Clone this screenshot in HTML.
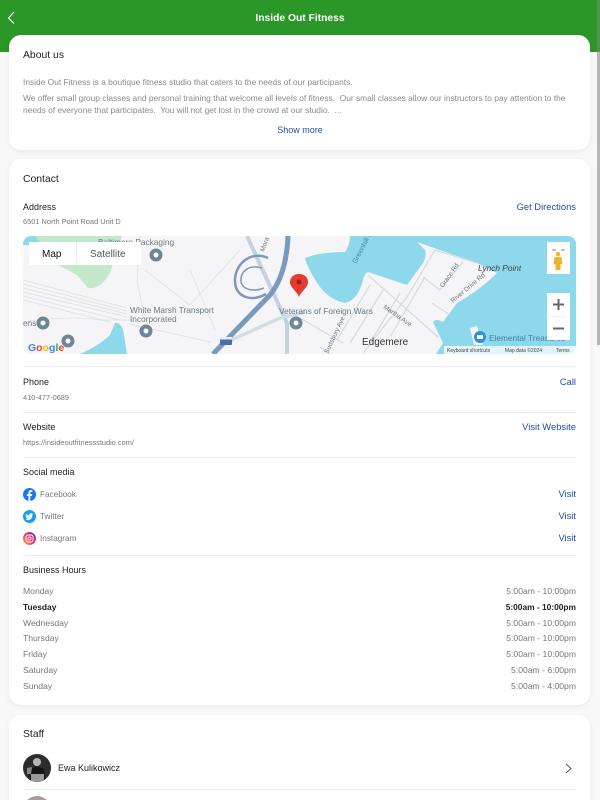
<!DOCTYPE html>
<html><head><meta charset="utf-8"><style>
*{box-sizing:border-box}
html,body{margin:0;padding:0;width:600px;height:800px;overflow:hidden;background:#f8f8f9;font-family:"Liberation Sans",sans-serif}
#w{position:relative;width:600px;height:800px;overflow:hidden;filter:blur(.3px)}
.hd{position:absolute;left:0;top:0;width:600px;height:52px;background:#2a9728}
.card{position:absolute;left:9px;width:581px;background:#fff;border-radius:12px;box-shadow:0 2px 6px rgba(0,0,0,.06)}
.t{position:absolute;white-space:nowrap;line-height:12px;height:12px}
.h{font-size:10.4px;color:#222;left:23px}
.g{font-size:8.4px;color:#8a8a8a;left:23px}
.s{font-size:7.4px;color:#777;left:23px}
.b{font-size:9.4px;color:#1f4fa0;right:24px}
.r{font-size:8.6px;color:#777;right:24px}
.d{font-size:8.6px;color:#777;left:23px}
.k{color:#222;font-weight:bold;font-size:8.4px}
.l{position:absolute;left:23px;width:553px;height:1px;background:#ececec}
.sb{position:absolute;left:597px;top:0;width:3px;height:345px;background:rgba(130,130,130,.55)}
svg{position:absolute}
</style></head><body><div id="w">
<div class="hd"></div>
<svg style="left:0;top:0" width="24" height="36" viewBox="0 0 24 36"><path d="M14 12 L8.500 18 L14 23.500" fill="none" stroke="#fff" stroke-width="1.1"/></svg>
<div class="t" style="left:0;width:600px;text-align:center;top:13px;font-size:10.300px;font-weight:bold;color:#fff">Inside Out Fitness</div>

<div class="card" style="top:35px;height:115px"></div>
<div class="card" style="top:159px;height:546px"></div>
<div class="card" style="top:715px;height:85px;border-radius:12px 12px 0 0"></div>

<div class="t h" style="top:50px">About us</div>
<div class="t g" style="top:76px">Inside Out Fitness is a boutique fitness studio that caters to the needs of our participants.</div>
<div class="t g" style="top:92px">We offer small group classes and personal training that welcome all levels of fitness.&nbsp; Our small classes allow our instructors to pay attention to the</div>
<div class="t g" style="top:104px">needs of everyone that participates.&nbsp; You will not get lost in the crowd at our studio.&nbsp; ...</div>
<div class="t" style="left:0;width:600px;text-align:center;top:124px;font-size:9px;color:#1f4fa0">Show more</div>

<div class="t h" style="top:174px">Contact</div>
<div class="t h" style="top:201px;font-size:9px">Address</div>
<div class="t b" style="top:201px">Get Directions</div>
<div class="t s" style="top:216px">6501 North Point Road Unit D</div>

<svg style="left:23px;top:236px" width="553" height="118" viewBox="23 236 553 118">
<defs><clipPath id="c"><rect x="23" y="236" width="553" height="118" rx="8"/></clipPath></defs>
<g clip-path="url(#c)">
<rect x="23" y="236" width="553" height="118" fill="#f5f4f6"/>
<path d="M23 236H48L35 245H23Z" fill="#8ed8ec"/>
<path d="M35 236H122L110 273Q100 290 88 288L77 275L58 265Z" fill="#c4e8cc"/>
<path d="M305 258Q320 252 345 252Q350 245 350 236H576V354H436L443 343L433 322Q436 318 443 322L457 303Q480 290 497 273L477 263L417 242L425 250Q427 256 423 263L407 285L368 272Q364 274 363 280Q358 300 345 303Q330 300 320 287Q308 270 305 258Z" fill="#8ed8ec"/>
<path d="M470 328L477 326L483 345L474 345Z" fill="#f5f4f6"/>
<path d="M115 323Q122 322 124 335L127 354H80Q100 345 110 335Z" fill="#8ed8ec"/>
<g fill="none" stroke="#dcdee2" stroke-width=".7">
<path d="M23 280L127 308M23 284L127 311M23 288L127 314M23 292L127 317M23 296L120 320M23 300L110 322"/>
<path d="M23 322Q70 315 100 320L130 320M130 324L210 342M140 236L137 280L145 320M145 270L190 305L240 250M190 270L215 330"/>
</g>
<g fill="none" stroke="#d4dae2" stroke-width="1.2">
<path d="M368 275L438 337M423 277L440 290M435 250L407 297L363 353M425 277L390 337M400 293L370 343M383 290L350 343M370 285L337 340M435 250L477 263M463 262L440 290M432 303L450 315M300 318L343 343M320 347L330 354"/>
</g>
<path d="M247 236L287 323V354" fill="none" stroke="#c3d2de" stroke-width="4"/>
<path d="M227 342L280 318L305 312" fill="none" stroke="#d2dde6" stroke-width="3.500"/>
<path d="M268 258C250 250 234 265 235 282C236 298 252 302 266 294" fill="none" stroke="#7b98bd" stroke-width="2.500"/>
<path d="M262 268C248 264 240 272 241 282C243 290 254 292 264 288" fill="none" stroke="#7b98bd" stroke-width="1.500"/>
<path d="M288 236C287 260 282 280 270 295L213 354" fill="none" stroke="#7b98bd" stroke-width="5"/>
<path d="M299 274c-6 0-9 4-9 8c0 6 7 9 9 15c2-6 9-9 9-15c0-4-3-8-9-8z" fill="#e53a30"/><circle cx="299" cy="282" r="2.500" fill="#a51f18"/>
<g fill="#6f8696"><circle cx="156" cy="255" r="6.500"/><circle cx="43" cy="323" r="6.500"/><circle cx="146" cy="331" r="6.500"/><circle cx="296" cy="323" r="6.500"/><circle cx="68" cy="341" r="6.500"/></g>
<g fill="#fff"><circle cx="156" cy="255" r="2.500"/><circle cx="43" cy="323" r="2.500"/><circle cx="146" cy="331" r="2.500"/><circle cx="296" cy="323" r="2.500"/><circle cx="68" cy="341" r="2.500"/></g>
<circle cx="480" cy="337" r="6" fill="#2f8fd8"/><rect x="477" y="335" width="6" height="4" fill="#fff"/>
<g font-family="Liberation Sans,sans-serif" font-size="8.300" fill="#6b7a86">
<text x="98" y="245">Baltimore Packaging</text>
<text x="130" y="313">White Marsh Transport</text><text x="130" y="322">Incorporated</text>
<text x="23" y="326">ens</text>
<text x="279" y="314">Veterans of Foreign Wars</text>
<text x="489" y="341" fill="#3e7fa8">Elemental Treasures</text>
<text x="362" y="345" font-size="10" fill="#333">Edgemere</text>
<text x="478" y="271" font-style="italic" fill="#444">Lynch Point</text>
<text font-size="6.500" transform="translate(443,288) rotate(-55)">Grace Rd</text>
<text font-size="6.500" transform="translate(453,303) rotate(-40)">River Drive Rd</text>
<text font-size="6.500" transform="translate(383,308) rotate(35)">Martha Ave</text>
<text font-size="6.500" transform="translate(328,354) rotate(-65)">Sudsbury Ave</text>
<text font-size="7" fill="#3e8fa8" transform="translate(356,264) rotate(-62)">Greenhill Cove</text>
<text font-size="6.500" transform="translate(264,252) rotate(-70)">Mora</text>
</g>
<rect x="220" y="337" width="12" height="8" rx="1" fill="#4a6fb0"/><rect x="220" y="337" width="12" height="2.500" fill="#e8eef5"/>
<text x="28" y="351" font-family="Liberation Sans,sans-serif" font-size="10.500" font-weight="bold"><tspan fill="#4285f4">G</tspan><tspan fill="#ea4335">o</tspan><tspan fill="#fbbc05">o</tspan><tspan fill="#4285f4">g</tspan><tspan fill="#34a853">l</tspan><tspan fill="#ea4335">e</tspan></text>
<rect x="29" y="242" width="112" height="23" fill="#fff"/><rect x="76" y="242" width=".6" height="23" fill="#e6e6e6"/>
<text x="42" y="257" font-family="Liberation Sans,sans-serif" font-size="10" fill="#111">Map</text>
<text x="90" y="257" font-family="Liberation Sans,sans-serif" font-size="10" fill="#555">Satellite</text>
<rect x="547" y="242" width="23" height="32" fill="#fff"/>
<path d="M553 251v-1h3M564 251v-1h-3" fill="none" stroke="#888"/>
<circle cx="558" cy="254" r="2.200" fill="#f0b32b"/><path d="M554.500 257h7l1 7h-2v6h-5v-6h-2z" fill="#f0b32b"/>
<rect x="547" y="293" width="23" height="47" fill="#fff"/><rect x="551" y="316" width="15" height=".7" fill="#e6e6e6"/>
<path d="M553 304.500h11M558.500 299v11M553 328.500h11" stroke="#666" stroke-width="2" fill="none"/>
<rect x="444" y="346" width="132" height="8" fill="#fff" fill-opacity=".75"/>
<g font-family="Liberation Sans,sans-serif" font-size="5" fill="#444"><text x="447" y="352">Keyboard shortcuts</text><text x="505" y="352">Map data ©2024</text><text x="556" y="352">Terms</text></g>
</g></svg>

<div class="l" style="top:366px"></div>
<div class="t h" style="top:376px;font-size:9px">Phone</div>
<div class="t b" style="top:376px">Call</div>
<div class="t s" style="top:392px">410-477-0689</div>
<div class="l" style="top:412px"></div>
<div class="t h" style="top:421px;font-size:9px">Website</div>
<div class="t b" style="top:421px">Visit Website</div>
<div class="t s" style="top:437px">https://insideoutfitnessstudio.com/</div>
<div class="l" style="top:457px"></div>
<div class="t h" style="top:466px;font-size:9px">Social media</div>

<svg style="left:23px;top:488px" width="13" height="13" viewBox="0 0 13 13"><circle cx="6.500" cy="6.500" r="6.500" fill="#1877f2"/><path d="M7.300 13V7.900H9L9.300 6H7.300V4.900C7.300 4.300 7.600 3.900 8.400 3.900H9.400V2.300C8 2 5.500 1.900 5.500 4.600V6H3.800V7.900H5.500V13Z" fill="#fff"/></svg>
<div class="t d" style="left:40px;top:489px;font-size:8.200px">Facebook</div>
<div class="t b" style="top:488px">Visit</div>
<svg style="left:23px;top:510px" width="13" height="13" viewBox="0 0 13 13"><circle cx="6.500" cy="6.500" r="6.500" fill="#1d9bf0"/><path d="M10.500 4.200c-.3.100-.6.200-1 .2.400-.2.600-.5.800-.9-.3.200-.7.300-1.100.4a1.700 1.700 0 0 0-2.900 1.600C4.900 5.400 3.700 4.800 2.900 3.800c-.5.800-.2 1.800.5 2.300-.3 0-.5-.1-.8-.2 0 .8.600 1.500 1.400 1.700-.3.100-.5.100-.8 0 .2.700.9 1.200 1.600 1.200-.7.500-1.500.8-2.400.7 2.900 1.800 7-.1 6.900-4.400.3-.2.500-.5.700-.7z" fill="#fff"/></svg>
<div class="t d" style="left:40px;top:511px;font-size:8.200px">Twitter</div>
<div class="t b" style="top:510px">Visit</div>
<svg style="left:23px;top:532px" width="13" height="13" viewBox="0 0 13 13"><defs><linearGradient id="ig" x1="0" y1="1" x2="1" y2="0"><stop offset="0" stop-color="#fdb54a"/><stop offset=".5" stop-color="#e1306c"/><stop offset="1" stop-color="#7a3bc8"/></linearGradient></defs><circle cx="6.500" cy="6.500" r="6.500" fill="url(#ig)"/><rect x="3" y="3" width="7" height="7" rx="2" fill="none" stroke="#fff" stroke-width=".9"/><circle cx="6.500" cy="6.500" r="1.600" fill="none" stroke="#fff" stroke-width=".9"/></svg>
<div class="t d" style="left:40px;top:533px;font-size:8.200px">Instagram</div>
<div class="t b" style="top:532px">Visit</div>
<div class="l" style="top:555px"></div>

<div class="t h" style="top:564px;font-size:9px">Business Hours</div>
<div class="t d" style="top:585px">Monday</div><div class="t r" style="top:585px">5:00am - 10:00pm</div>
<div class="t d k" style="top:601px">Tuesday</div><div class="t r k" style="top:601px">5:00am - 10:00pm</div>
<div class="t d" style="top:617px">Wednesday</div><div class="t r" style="top:617px">5:00am - 10:00pm</div>
<div class="t d" style="top:632px">Thursday</div><div class="t r" style="top:632px">5:00am - 10:00pm</div>
<div class="t d" style="top:648px">Friday</div><div class="t r" style="top:648px">5:00am - 10:00pm</div>
<div class="t d" style="top:664px">Saturday</div><div class="t r" style="top:664px">5:00am - 6:00pm</div>
<div class="t d" style="top:680px">Sunday</div><div class="t r" style="top:680px">5:00am - 4:00pm</div>

<div class="t h" style="top:729px">Staff</div>
<svg style="left:23px;top:754px" width="28" height="28" viewBox="0 0 28 28"><defs><clipPath id="av"><circle cx="14" cy="14" r="14"/></clipPath></defs><g clip-path="url(#av)"><rect width="28" height="28" fill="#2c2c2c"/><circle cx="14" cy="8" r="4" fill="#b5b5b5"/><path d="M6 28L8 15L12 13H16L21 15L23 28Z" fill="#151515"/><rect x="8" y="20" width="13" height="8" fill="#9a9a9a"/><path d="M4 14L9 13L8 20H4Z" fill="#888"/></g></svg>
<div class="t h" style="left:58px;top:762px;font-size:9px">Ewa Kulikowicz</div>
<svg style="left:562px;top:761px" width="12" height="14" viewBox="0 0 12 14"><path d="M4 3L9 7.500L4 12" fill="none" stroke="#555" stroke-width="1"/></svg>
<div class="l" style="top:789px"></div>
<svg style="left:23px;top:796px" width="28" height="4" viewBox="0 0 28 4"><ellipse cx="14" cy="14" rx="14" ry="14" fill="#a89f94"/></svg>
<div class="sb"></div>
</div></body></html>
